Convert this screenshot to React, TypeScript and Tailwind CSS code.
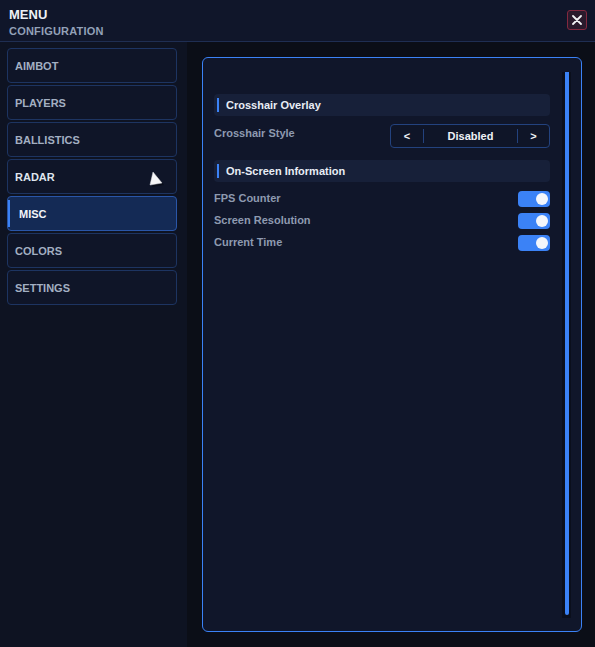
import React from 'react';

const font = { fontFamily: '"Liberation Sans", Arial, sans-serif' };

const tabs = ['AIMBOT', 'PLAYERS', 'BALLISTICS', 'RADAR', 'MISC', 'COLORS', 'SETTINGS'];

function SectionHeader({ title }: { title: string }) {
  return (
    <div className="flex items-center h-[22px] rounded-[4px] bg-[#172039] pl-[3px]">
      <div className="w-[2px] h-[14px] bg-[#3b82f6]" />
      <span className="ml-[7px] text-[11px] font-bold text-[#e8edf5]">{title}</span>
    </div>
  );
}

function Toggle() {
  return (
    <div className="flex items-center justify-end w-[32px] h-[16px] rounded-[4px] bg-[#3b82f6] pr-[2px]">
      <div className="w-[12px] h-[12px] rounded-full bg-[#f4f6fb]" />
    </div>
  );
}

function ToggleRow({ label }: { label: string }) {
  return (
    <div className="flex items-center justify-between h-[16px]">
      <span className="text-[11px] font-bold text-[#8e9ab0] -mt-[1px]">{label}</span>
      <Toggle />
    </div>
  );
}

export default function App() {
  return (
    <div style={font} className="relative w-[595px] h-[647px] flex flex-col bg-[#0b0e17] overflow-hidden">
      {/* Header */}
      <div className="flex-none h-[42px] flex items-start justify-between bg-[#10162a] border-b border-[#1f2e52] pl-[9px] pr-[8px]">
        <div className="pt-[8px] leading-none">
          <div className="text-[13px] font-bold text-[#eef1f6]">MENU</div>
          <div className="mt-[5px] text-[11px] font-bold text-[#93a1b8] tracking-[0.2px]">CONFIGURATION</div>
        </div>
        <button className="mt-[10px] w-[20px] h-[20px] flex items-center justify-center rounded-[3px] bg-[#2a1a2c] border border-[#83283f]">
          <svg width="10" height="10" viewBox="0 0 10 10">
            <path d="M1 1 L9 9 M9 1 L1 9" stroke="#f2f2f5" strokeWidth="1.8" strokeLinecap="round" />
          </svg>
        </button>
      </div>

      <div className="flex-1 flex min-h-0">
        {/* Sidebar */}
        <div className="w-[187px] flex-none bg-[#0e1322] pt-[6px] pl-[7px] pr-[10px] flex flex-col gap-[2px]">
          {tabs.map((t) => {
            const active = t === 'MISC';
            return active ? (
              <div
                key={t}
                className="relative h-[35px] flex items-center rounded-[4px] bg-[#142a55] border border-[#2a56a8] pl-[11px] pt-[1px] overflow-hidden"
              >
                <div className="absolute left-0 top-[3px] bottom-[3px] w-[2px] bg-[#3b82f6]" />
                <span className="text-[11px] font-bold text-[#f2f5fa]">{t}</span>
              </div>
            ) : (
              <div
                key={t}
                className="h-[35px] flex items-center rounded-[4px] bg-[#0f1528] border border-[#1d3461] pl-[7px] pt-[1px]"
              >
                <span className={`text-[11px] font-bold ${t === 'RADAR' ? 'text-[#dfe5ee]' : 'text-[#a3afc2]'}`}>{t}</span>
              </div>
            );
          })}
        </div>

        {/* Content */}
        <div className="flex-1 pt-[15px] pl-[15px] pr-[13px] pb-[15px]">
          <div className="h-full flex rounded-[6px] border border-[#3b82f6] bg-[#10162a]">
            <div className="flex-1 pl-[11px] pt-[36px] flex flex-col">
              <SectionHeader title="Crosshair Overlay" />
              <div className="mt-[8px] flex items-center justify-between h-[24px]">
                <span className="text-[11px] font-bold text-[#8e9ab0] -mt-[6px]">Crosshair Style</span>
                <div className="w-[160px] h-[24px] flex items-center rounded-[4px] border border-[#23427e] bg-[#0f1528] text-[11px] font-bold text-[#eef1f6]">
                  <span className="w-[32px] text-center">&lt;</span>
                  <div className="w-px h-[14px] bg-[#23427e]" />
                  <span className="flex-1 text-center">Disabled</span>
                  <div className="w-px h-[14px] bg-[#23427e]" />
                  <span className="w-[31px] text-center">&gt;</span>
                </div>
              </div>
              <div className="mt-[12px]">
                <SectionHeader title="On-Screen Information" />
              </div>
              <div className="mt-[9px] flex flex-col gap-[6px]">
                <ToggleRow label="FPS Counter" />
                <ToggleRow label="Screen Resolution" />
                <ToggleRow label="Current Time" />
              </div>
            </div>
            {/* Scrollbar */}
            <div className="w-[31px] flex-none flex justify-center pt-[14px] pb-[13px] pl-[2px]">
              <div className="w-[9px] h-full bg-[#0b0f1c] flex justify-center pb-[3px]">
                <div className="w-[4px] h-full rounded-b-[2px] bg-[#3b82f6]" />
              </div>
            </div>
          </div>
        </div>
      </div>

      {/* Mouse pointer */}
      <svg className="absolute left-[147px] top-[170px]" width="20" height="20" viewBox="0 0 20 20">
        <path d="M7 3 L16 14 L4 16 Z" fill="#000000" opacity="0.35" transform="translate(1 1)" />
        <path d="M6 2 L15 13 L3 15 Z" fill="#f6f6f8" stroke="#d8d8de" strokeWidth="0.5" strokeLinejoin="round" />
      </svg>
    </div>
  );
}
